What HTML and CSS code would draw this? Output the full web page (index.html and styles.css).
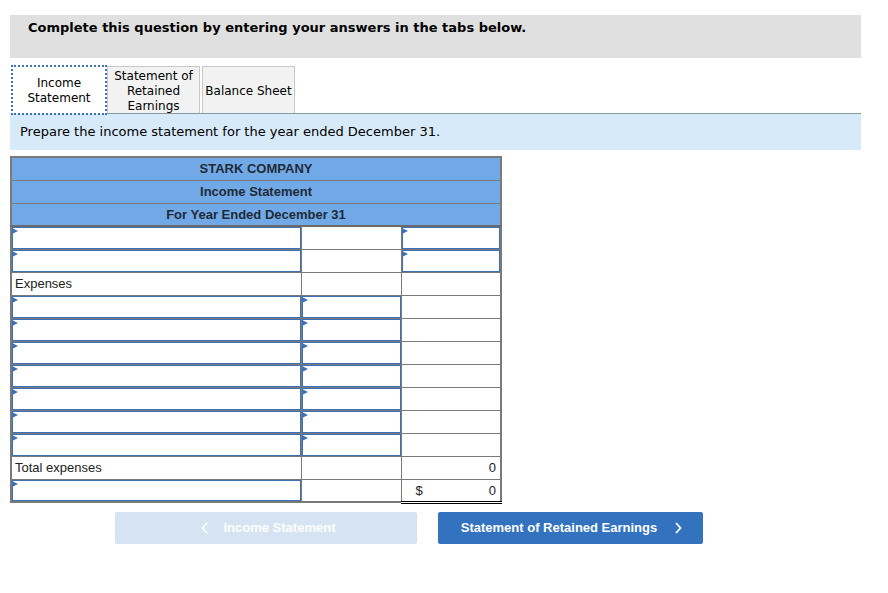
FILE: index.html
```html
<!DOCTYPE html>
<html>
<head>
<meta charset="utf-8">
<link rel="stylesheet" href="styles.css">
</head>
<body>
<div class="page">
  <div class="banner">Complete this question by entering your answers in the tabs below.</div>
  <div class="tabs">
    <div class="tab active">Income<br>Statement</div>
    <div class="tab">Statement of<br>Retained<br>Earnings</div>
    <div class="tab">Balance Sheet</div>
    <div class="tabline"></div>
  </div>
  <div class="instr">Prepare the income statement for the year ended December 31.</div>
  <table class="stmt">
    <colgroup><col class="c1"><col class="c2"><col class="c3"></colgroup>
    <tr class="hd"><td colspan="3">STARK COMPANY</td></tr>
    <tr class="hd"><td colspan="3">Income Statement</td></tr>
    <tr class="hd last"><td colspan="3">For Year Ended December 31</td></tr>
    <tr><td class="in"><div class="box"></div></td><td></td><td class="in"><div class="box"></div></td></tr>
    <tr><td class="in"><div class="box"></div></td><td></td><td class="in"><div class="box"></div></td></tr>
    <tr><td class="lbl">Expenses</td><td></td><td></td></tr>
    <tr><td class="in"><div class="box"></div></td><td class="in"><div class="box"></div></td><td></td></tr>
    <tr><td class="in"><div class="box"></div></td><td class="in"><div class="box"></div></td><td></td></tr>
    <tr><td class="in"><div class="box"></div></td><td class="in"><div class="box"></div></td><td></td></tr>
    <tr><td class="in"><div class="box"></div></td><td class="in"><div class="box"></div></td><td></td></tr>
    <tr><td class="in"><div class="box"></div></td><td class="in"><div class="box"></div></td><td></td></tr>
    <tr><td class="in"><div class="box"></div></td><td class="in"><div class="box"></div></td><td></td></tr>
    <tr><td class="in"><div class="box"></div></td><td class="in"><div class="box"></div></td><td></td></tr>
    <tr><td class="lbl">Total expenses</td><td></td><td class="num">0</td></tr>
    <tr><td class="in"><div class="box"></div></td><td></td><td class="num total"><span class="dollar">$</span><span>0</span></td></tr>
  </table>
  <div class="nav">
    <div class="btn prev">
      <svg class="chev" width="8" height="12" viewBox="0 0 8 12"><polyline points="6,1 1.5,6 6,11" fill="none" stroke="#fff" stroke-width="1.6"/></svg>
      <span>Income Statement</span>
    </div>
    <div class="btn next">
      <span>Statement of Retained Earnings</span>
      <svg class="chev" width="8" height="12" viewBox="0 0 8 12"><polyline points="2,1 6.5,6 2,11" fill="none" stroke="#fff" stroke-width="1.8"/></svg>
    </div>
  </div>
</div>
</body>
</html>
```
FILE: styles.css
```css
html, body { margin: 0; padding: 0; background: #fff; }
.page {
  padding: 15px 27px 0 10px;
  font-family: "DejaVu Sans", Verdana, sans-serif;
  color: #000;
}
.banner {
  background: #e0e0e0;
  height: 43px;
  box-sizing: border-box;
  padding: 5px 0 0 18px;
  font-size: 13px;
  font-weight: bold;
  line-height: 16px;
}
.tabs {
  margin-top: 8px;
  display: flex;
  align-items: stretch;
  height: 48px;
  position: relative;
}
.tab {
  box-sizing: border-box;
  height: 47px;
  border: 1px solid #c8c8c8;
  border-bottom: none;
  background: #f2f2f2;
  font-size: 12px;
  line-height: 15px;
  text-align: center;
  display: flex;
  align-items: center;
  justify-content: center;
  margin-right: 2px;
}
.tab:nth-child(1) { width: 94px; margin-left: 2px; margin-right: 1px; }
.tab:nth-child(2) { width: 93px; padding-top: 2px; }
.tab:nth-child(3) { width: 93px; padding-top: 2px; }
.tab.active {
  background: #fff;
  border: none;
  outline: 2px dotted #3d72bd;
  outline-offset: -1px;
  height: 48px;
  position: relative;
  z-index: 1;
  padding-top: 2px;
}
.tabline {
  flex: 1;
  align-self: flex-end;
  border-bottom: 1px solid #8e979e;
  margin-left: -190px;
}
.instr {
  background: #d7eaf9;
  height: 36px;
  box-sizing: border-box;
  padding: 10px 0 0 10px;
  font-size: 13px;
  line-height: 16px;
}
.stmt {
  margin-top: 6px;
  border-collapse: collapse;
  width: 491px;
  table-layout: fixed;
  font-family: "Liberation Sans", Arial, sans-serif;
  font-size: 13px;
  color: #222;
  border: 2px solid #7a7a7a;
}
.c1 { width: 290px; }
.c2 { width: 100px; }
.c3 { width: 100px; }
.stmt td {
  border: 1px solid #7a7a7a;
  height: 23px;
  box-sizing: border-box;
  padding: 0;
}
.stmt tr.hd td {
  background: #71a9e7;
  text-align: center;
  font-weight: bold;
  color: #1f2a36;
}
.stmt tr.hd.last td { border-bottom: 2px solid #6b6b6b; }
.stmt td.lbl { padding-left: 3px; color: #222; }
.stmt td.in { position: relative; }
.box {
  position: absolute;
  inset: 0;
  border: 1.5px solid #3d71b7;
  background: #fff;
}
.box::before {
  content: "";
  position: absolute;
  left: -1px;
  top: 0;
  border-left: 6px solid #3d71b7;
  border-top: 3px solid transparent;
  border-bottom: 3px solid transparent;
}
.stmt td.num { text-align: right; padding-right: 4px; color: #222; }
.stmt td.total {
  border-top: 1px solid #000;
  border-bottom: 3px double #000;
}
.total .dollar { float: left; padding-left: 14px; }
.nav {
  display: flex;
  gap: 21px;
  margin: 8px 0 0 105px;
}
.btn {
  height: 32px;
  border-radius: 2px;
  display: flex;
  align-items: center;
  justify-content: center;
  color: #fff;
  font-family: "Liberation Sans", Arial, sans-serif;
  font-weight: bold;
  font-size: 13px;
}
.btn.prev { width: 302px; background: #d6e3f3; gap: 15px; padding-left: 4px; box-sizing: border-box; }
.btn.next { width: 265px; background: #3272bf; gap: 17px; padding-left: 2px; box-sizing: border-box; }
.chev { display: block; }
```
